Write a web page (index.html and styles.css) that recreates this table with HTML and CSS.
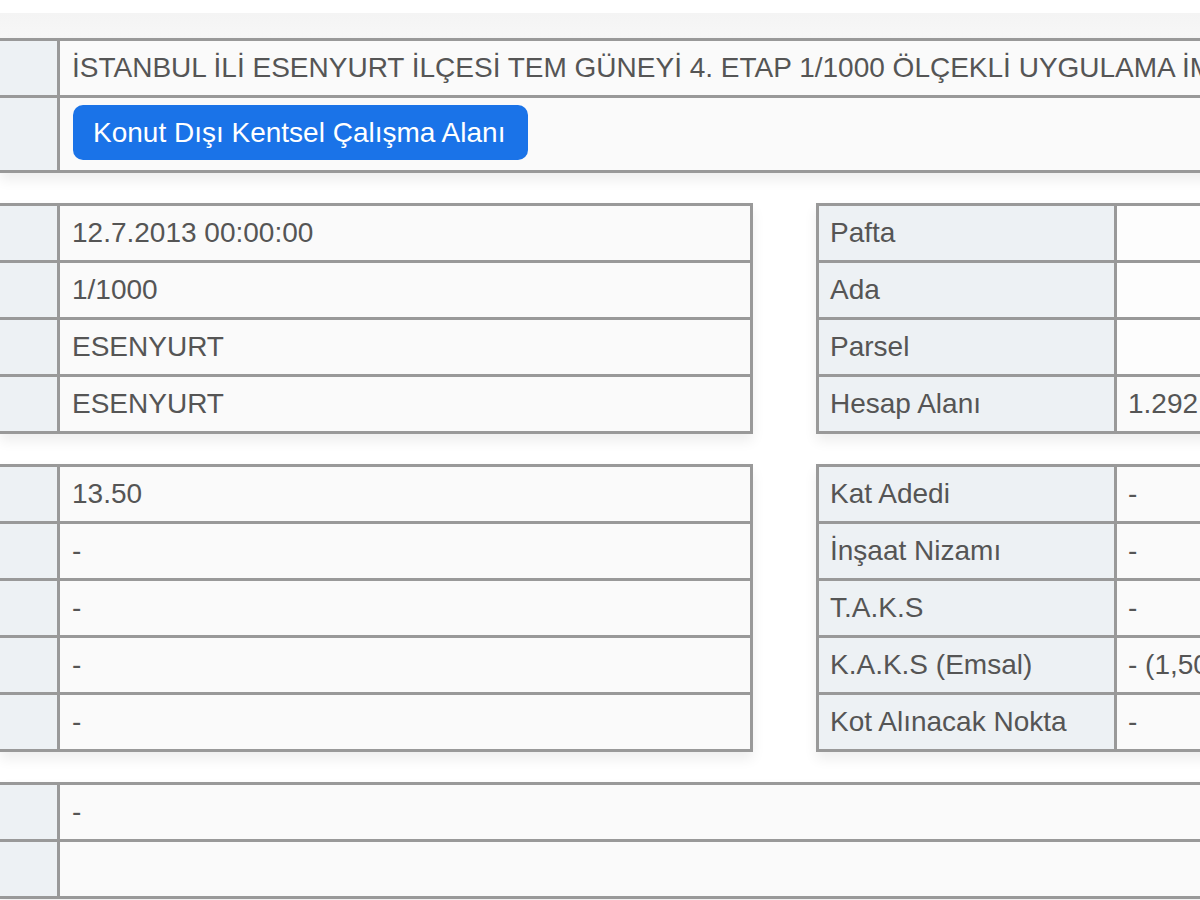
FILE: index.html
```html
<!DOCTYPE html>
<html lang="tr">
<head>
<meta charset="utf-8">
<title>Plan Bilgileri</title>
<link rel="stylesheet" href="styles.css">
</head>
<body>
<div class="top-shade"></div>
<div class="page">
  <div class="tbl wide">
    <div class="c lab"></div>
    <div class="c val">İSTANBUL İLİ ESENYURT İLÇESİ TEM GÜNEYİ 4. ETAP 1/1000 ÖLÇEKLİ UYGULAMA İMAR PLANI</div>
    <div class="c lab tall"></div>
    <div class="c val tall btn-cell"><span class="btn">Konut Dışı Kentsel Çalışma Alanı</span></div>
  </div>

  <div class="split">
    <div class="tbl left">
      <div class="c lab"></div><div class="c val">12.7.2013 00:00:00</div>
      <div class="c lab"></div><div class="c val">1/1000</div>
      <div class="c lab"></div><div class="c val">ESENYURT</div>
      <div class="c lab"></div><div class="c val">ESENYURT</div>
    </div>
    <div class="tbl right">
      <div class="c lab">Pafta</div><div class="c val blank"></div>
      <div class="c lab">Ada</div><div class="c val blank"></div>
      <div class="c lab">Parsel</div><div class="c val blank"></div>
      <div class="c lab">Hesap Alanı</div><div class="c val">1.292,00</div>
    </div>
  </div>

  <div class="split">
    <div class="tbl left">
      <div class="c lab"></div><div class="c val">13.50</div>
      <div class="c lab"></div><div class="c val">-</div>
      <div class="c lab"></div><div class="c val">-</div>
      <div class="c lab"></div><div class="c val">-</div>
      <div class="c lab"></div><div class="c val">-</div>
    </div>
    <div class="tbl right">
      <div class="c lab">Kat Adedi</div><div class="c val">-</div>
      <div class="c lab">İnşaat Nizamı</div><div class="c val">-</div>
      <div class="c lab">T.A.K.S</div><div class="c val">-</div>
      <div class="c lab">K.A.K.S (Emsal)</div><div class="c val">- (1,50)</div>
      <div class="c lab">Kot Alınacak Nokta</div><div class="c val">-</div>
    </div>
  </div>

  <div class="tbl wide">
    <div class="c lab"></div>
    <div class="c val">-</div>
    <div class="c lab"></div>
    <div class="c val"></div>
  </div>
</div>
</body>
</html>
```

FILE: styles.css
```css
html, body {
  margin: 0;
  padding: 0;
}
body {
  width: 1200px;
  height: 900px;
  overflow: hidden;
  background: #ffffff;
  font-family: "Liberation Sans", Arial, sans-serif;
  font-size: 28px;
  color: #555555;
}
.top-shade {
  height: 25px;
  margin-top: 13px;
  background: linear-gradient(#f4f4f4, #f7f7f7);
}
.page {
  display: flex;
  flex-direction: column;
  align-items: flex-start;
  gap: 30px;
}
.tbl {
  display: grid;
  gap: 3px;
  padding: 3px 0;
  background: #999999;
  box-shadow: 0 7px 12px rgba(0, 0, 0, 0.07);
}
.wide {
  width: 1300px;
  grid-template-columns: 57px 1fr;
}
.split {
  display: flex;
  gap: 63px;
}
.left {
  width: 750px;
  padding-right: 3px;
  grid-template-columns: 57px 1fr;
}
.right {
  width: 450px;
  padding-left: 3px;
  grid-template-columns: 295px 1fr;
}
.c {
  display: flex;
  align-items: center;
  height: 54px;
  padding: 0 12px;
  white-space: nowrap;
  overflow: hidden;
}
.right .c {
  padding: 0 11px;
}
.lab {
  background: #edf1f4;
}
.val {
  background: #fafafa;
}
.val.blank {
  background: #fdfdfd;
}
.tall {
  height: 72px;
}
.btn-cell {
  align-items: flex-start;
  padding: 7px 13px 10px;
  box-sizing: border-box;
}
.btn {
  display: inline-flex;
  align-items: center;
  height: 55px;
  padding: 0 23px 0 20px;
  background: #1a73e8;
  color: #ffffff;
  border-radius: 10px;
}
```
